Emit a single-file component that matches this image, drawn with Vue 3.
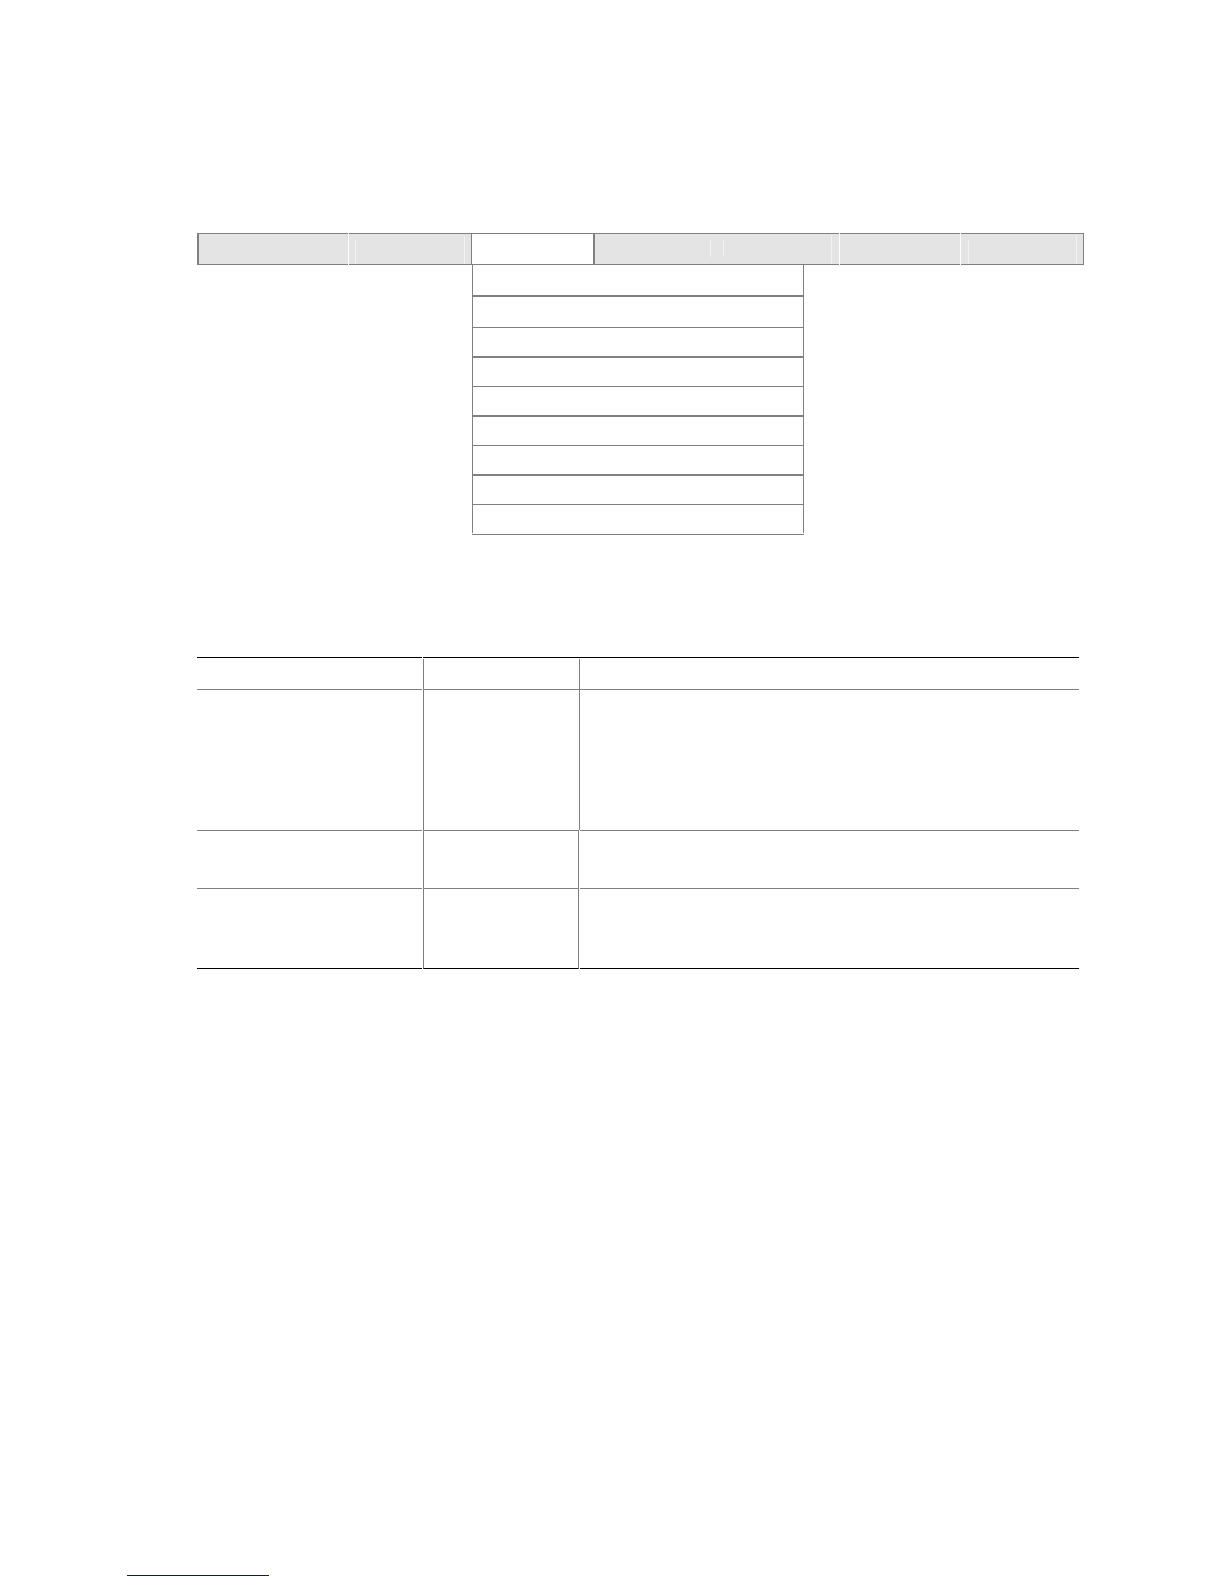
<script setup>
const tabs = [
  { id: 'first' },
  { id: 'second', left: 'long', right: 'tall' },
  { id: 'open' },
  { id: 'fourth', right: 'short' },
  { id: 'fifth', left: 'short', right: 'tall' },
  { id: 'sixth' },
  { id: 'last', left: 'long', right: 'tall' }
]
const menuItems = 9
const rows = ['tall-row', 'mid-row', 'end-row']
</script>

<template>
  <div class="page">
    <main class="content">
      <nav class="menu">
        <div class="bar">
          <button v-for="tab in tabs" :key="tab.id" type="button" class="tab" :class="tab.id">
            <span class="mark" :class="tab.left"></span>
            <span class="mark" :class="tab.right"></span>
          </button>
        </div>
        <ul class="dropdown">
          <li v-for="n in menuItems" :key="n"></li>
        </ul>
      </nav>

      <table class="grid">
        <colgroup>
          <col class="col-name" />
          <col class="col-value" />
          <col />
        </colgroup>
        <thead>
          <tr class="head-row">
            <th><div></div></th>
            <th><div></div></th>
            <th><div></div></th>
          </tr>
        </thead>
        <tbody>
          <tr v-for="row in rows" :key="row" :class="row">
            <td><div></div></td>
            <td><div></div></td>
            <td><div></div></td>
          </tr>
        </tbody>
      </table>
    </main>
    <footer class="footer"><a href="#" class="link"></a></footer>
  </div>
</template>

<style>
body {
  margin: 0;
  background: #fff;
}
</style>

<style scoped>
.page {
  box-sizing: border-box;
  min-height: 100vh;
  padding: 233px 140px 8px 127px;
  display: flex;
  flex-direction: column;
  justify-content: space-between;
  font-family: "Liberation Sans", Arial, sans-serif;
}
.content {
  padding-left: 70px;
}
.bar {
  display: grid;
  grid-template-columns: 152fr 122fr 124fr 122fr 123fr 121fr 123fr;
}
.tab {
  box-sizing: border-box;
  display: flex;
  justify-content: space-between;
  height: 32px;
  margin: 0;
  padding: 0 6px;
  border: 0 solid #808080;
  border-width: 1px 0;
  border-radius: 0;
  background: #e4e4e4;
}
.tab.first {
  margin-right: 1px;
  border-left-width: 2px;
}
.tab.open {
  border-left-width: 1px;
  border-right-width: 2px;
  background: #fff;
}
.tab.fifth,
.tab.sixth {
  margin-right: 1px;
}
.tab.fifth {
  padding-right: 7px;
}
.tab.last {
  padding-left: 7px;
  border-right-width: 1px;
}
.mark {
  width: 1px;
}
.long,
.short,
.tall {
  background: #f3f3f3;
}
.long {
  height: 24px;
  margin-top: 6px;
}
.short {
  height: 17px;
  margin-top: 6px;
}
.tall {
  height: 28px;
  margin-top: 2px;
}
.dropdown {
  box-sizing: border-box;
  width: 332px;
  margin: 0 0 0 275px;
  padding: 0 0 1px;
  list-style: none;
  border-bottom: 1px solid #808080;
}
.dropdown li {
  box-sizing: border-box;
  height: 30px;
  border: 0 solid #808080;
  border-width: 0 1px 2px;
}
.dropdown li:nth-child(even) {
  height: 29px;
  border-bottom-width: 1px;
}
.dropdown li:nth-child(1) {
  height: 32px;
}
.dropdown li:nth-child(2) {
  height: 31px;
}
.dropdown li:last-child {
  height: 28px;
  border-bottom-width: 0;
}
.grid {
  width: calc(100% - 5px);
  margin-top: 122px;
  table-layout: fixed;
  border-collapse: separate;
  border-spacing: 0;
}
.col-name {
  width: 226px;
}
.col-value {
  width: 156px;
}
.grid th,
.grid td {
  padding: 0;
}
.grid div {
  box-sizing: border-box;
  border: 0 solid #808080;
  border-top-width: 1px;
}
.grid th:first-child,
.grid td:first-child {
  padding-right: 1px;
}
.grid th:nth-child(2) div,
.grid td:nth-child(2) div {
  border-left-width: 1px;
}
.head-row div {
  height: 32px;
}
.grid .head-row th:first-child div {
  border-top-color: #000;
}
.grid .head-row th:nth-child(n + 2) {
  padding-top: 1px;
  border-top: 1px solid #000;
}
.grid .head-row th:nth-child(n + 2) div {
  height: 30px;
  border-top-width: 0;
}
.head-row th:last-child div,
.tall-row td:last-child div {
  border-left-width: 1px;
}
.tall-row div {
  height: 141px;
}
.mid-row div {
  height: 58px;
}
.end-row div {
  height: 81px;
}
.mid-row td:nth-child(2) div,
.end-row td:nth-child(2) div {
  border-right-width: 1px;
}
.mid-row td:last-child,
.end-row td:last-child {
  padding-left: 1px;
}
.grid .end-row div {
  border-bottom: 1px solid #000;
}
.footer {
  display: flex;
}
.link {
  width: 142px;
  height: 16px;
  border-bottom: 1px solid #101090;
}
</style>
